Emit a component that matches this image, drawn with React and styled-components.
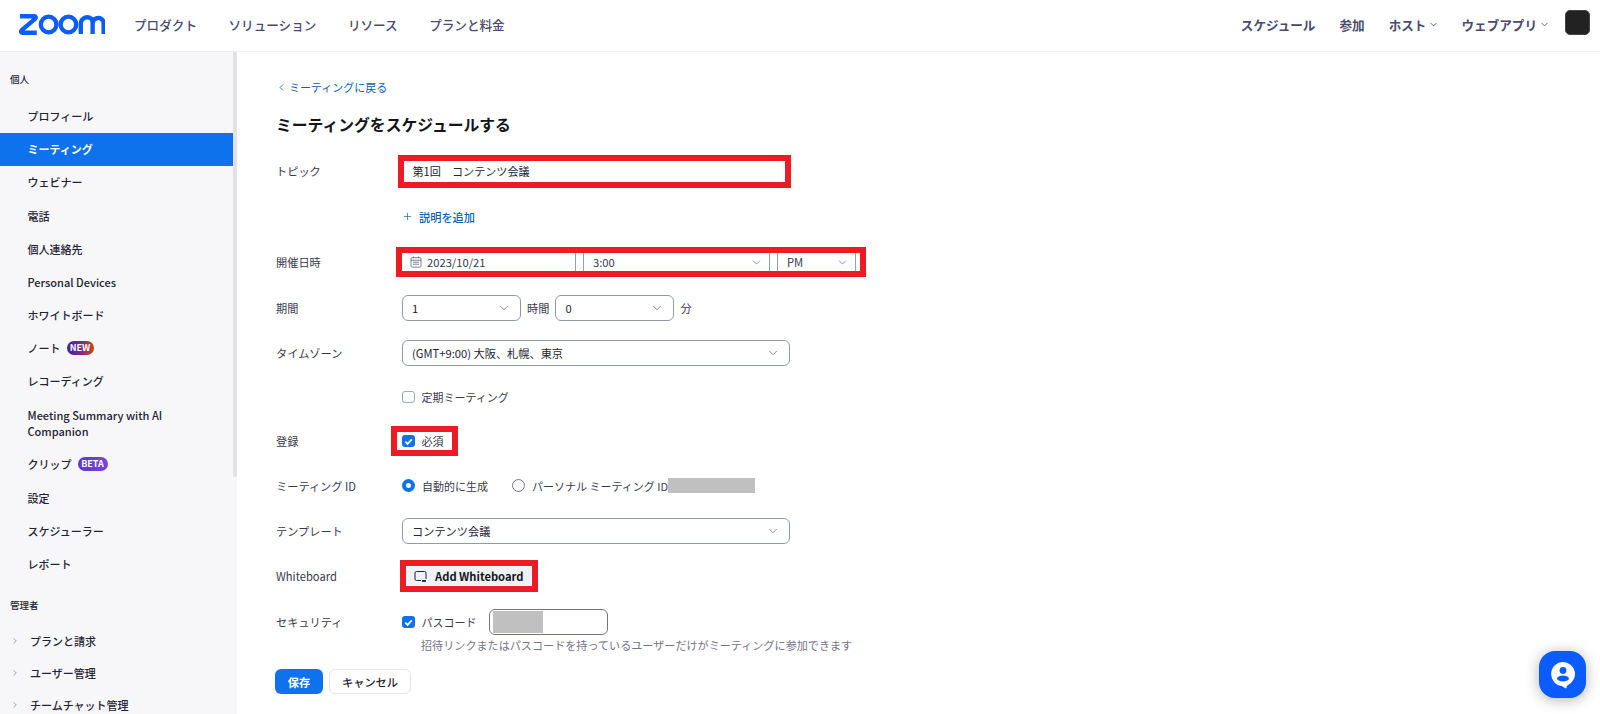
import React from 'react';
import styled, { createGlobalStyle } from 'styled-components';
import { ChevronDown, ChevronLeft, ChevronRight, Plus } from 'lucide-react';

const GlobalStyle = createGlobalStyle`
	html, body {
		margin: 0;
		height: 100%;
		overflow: hidden;
		background: #fff;
		font-family: 'Noto Sans CJK JP', 'Noto Sans', sans-serif;
		color: #232333;
	}
	* {
		box-sizing: border-box;
	}
`;

const personal = [
	{ text: 'プロフィール' },
	{ text: 'ミーティング', active: true },
	{ text: 'ウェビナー' },
	{ text: '電話' },
	{ text: '個人連絡先' },
	{ text: 'Personal Devices' },
	{ text: 'ホワイトボード' },
	{ text: 'ノート', badge: 'NEW' },
	{ text: 'レコーディング' },
	{ text: 'Meeting Summary with AI Companion', tall: true },
	{ text: 'クリップ', badge: 'BETA' },
	{ text: '設定' },
	{ text: 'スケジューラー' },
	{ text: 'レポート' },
];

const admin = ['プランと請求', 'ユーザー管理', 'チームチャット管理'];

function ZoomLogo() {
	return (
		<svg width="87" height="22" viewBox="0 0 88 22" fill="none" stroke="#0b5cff" strokeWidth="4.4">
			<path d="M2 3.2h14.5c1.4 0 2 1.3 1 2.3L3.5 17.5c-1 1-.4 2.3 1 2.3H19" strokeLinejoin="round" />
			<circle cx="31" cy="11.5" r="7.9" />
			<circle cx="51" cy="11.5" r="7.9" />
			<path d="M63.5 21v-11a6.6 6.6 0 0 1 10.6-4.4a6.6 6.6 0 0 1 1.4 4.4v11M75.5 10a5.7 5.7 0 0 1 10.4-2.6c.5 1 .7 1.8.7 2.6v11" />
		</svg>
	);
}

function Check() {
	return (
		<svg width="9" height="9" viewBox="0 0 10 10" fill="none" stroke="#fff" strokeWidth="2">
			<path d="M1.5 5.2l2.5 2.4 4.6-5" />
		</svg>
	);
}

function Select({ width, children }) {
	return (
		<SelectBox $width={width}>
			<span>{children}</span>
			<ChevronDown size={14} strokeWidth={1.4} color="#6e7680" />
		</SelectBox>
	);
}

export default function App() {
	return (
		<Page>
			<GlobalStyle />
			<Header>
				<LogoWrap>
					<ZoomLogo />
				</LogoWrap>
				<Nav>
					<NavLink>プロダクト</NavLink>
					<NavLink>ソリューション</NavLink>
					<NavLink>リソース</NavLink>
					<NavLink>プランと料金</NavLink>
				</Nav>
				<RightNav>
					<NavLink $strong>スケジュール</NavLink>
					<NavLink $strong>参加</NavLink>
					<NavLink $strong>
						ホスト
						<ChevronDown size={11} strokeWidth={1.8} />
					</NavLink>
					<NavLink $strong $pull>
						ウェブアプリ
						<ChevronDown size={11} strokeWidth={1.8} />
					</NavLink>
					<Avatar />
				</RightNav>
			</Header>
			<Body>
				<Sidebar>
					<SideInner>
						<SectionLabel>個人</SectionLabel>
						{personal.map(item => (
							<SideItem key={item.text} $active={item.active} $tall={item.tall}>
								<span>{item.text}</span>
								{item.badge && <Badge $kind={item.badge}>{item.badge}</Badge>}
							</SideItem>
						))}
						<SectionLabel $admin>管理者</SectionLabel>
						{admin.map(text => (
							<AdminItem key={text}>
								<ChevronRight size={10} strokeWidth={1.5} color="#747487" />
								{text}
							</AdminItem>
						))}
					</SideInner>
					<ScrollTrack>
						<ScrollThumb />
					</ScrollTrack>
				</Sidebar>
				<Main>
					<BackLink>
						<ChevronLeft size={11} strokeWidth={1.8} />
						ミーティングに戻る
					</BackLink>
					<Title>ミーティングをスケジュールする</Title>

					<Row $h={46}>
						<Label>トピック</Label>
						<RedBox $width={393} $height={33}>
							<TopicText>第1回　コンテンツ会議</TopicText>
						</RedBox>
					</Row>
					<Row $h={45}>
						<span />
						<AddLink>
							<Plus size={11} strokeWidth={1.5} />
							説明を追加
						</AddLink>
					</Row>
					<Row $h={46}>
						<Label>開催日時</Label>
						<RedBox $width={470} $height={30} $start={-6}>
							<DateRow>
								<DateCell $width={174}>
									<svg width="12" height="12" viewBox="0 0 12 12" fill="none" stroke="#747487" strokeWidth="0.9">
										<rect x="1" y="1.6" width="10" height="9.6" rx="1.4" />
										<path d="M1 4.2h10M3.4.4v2M8.6.4v2M3 6.2h6M3 8.2h6" />
									</svg>
									2023/10/21
								</DateCell>
								<DateCell $width={187} $gap>
									<span>3:00</span>
									<ChevronDown size={13} strokeWidth={1.4} color="#6e7680" />
								</DateCell>
								<DateCell $width={79} $gap>
									<span>PM</span>
									<ChevronDown size={13} strokeWidth={1.4} color="#6e7680" />
								</DateCell>
							</DateRow>
						</RedBox>
					</Row>
					<Row $h={45}>
						<Label>期間</Label>
						<Inline>
							<Select width={119}>1</Select>
							<InlineText>時間</InlineText>
							<Select width={119}>0</Select>
							<InlineText>分</InlineText>
						</Inline>
					</Row>
					<Row $h={45}>
						<Label>タイムゾーン</Label>
						<Select width={388}>(GMT+9:00) 大阪、札幌、東京</Select>
					</Row>
					<Row $h={44}>
						<span />
						<CheckRow>
							<CheckBox />
							定期ミーティング
						</CheckRow>
					</Row>
					<Row $h={44}>
						<Label>登録</Label>
						<RedBox $width={67} $height={30} $start={-11}>
							<CheckRow>
								<CheckBox $on>
									<Check />
								</CheckBox>
								必須
							</CheckRow>
						</RedBox>
					</Row>
					<Row $h={45}>
						<Label>ミーティング ID</Label>
						<Inline>
							<CheckRow>
								<Radio $on />
								自動的に生成
							</CheckRow>
							<RadioGap />
							<CheckRow>
								<Radio />
								パーソナル ミーティング ID
							</CheckRow>
							<Redacted $width={87} $height={15} />
						</Inline>
					</Row>
					<Row $h={45}>
						<Label>テンプレート</Label>
						<Select width={388}>コンテンツ会議</Select>
					</Row>
					<Row $h={46}>
						<Label>Whiteboard</Label>
						<RedBox $width={138} $height={32} $start={-2}>
							<WhiteboardBtn>
								<svg width="13" height="13" viewBox="0 0 13 13" fill="none" stroke="#232333" strokeWidth="1">
									<path d="M7 10.5H2.5a1.5 1.5 0 0 1-1.5-1.5V3a1.5 1.5 0 0 1 1.5-1.5h8A1.5 1.5 0 0 1 12 3v6" />
									<path d="M8 11H12" strokeWidth="1.8" />
								</svg>
								Add Whiteboard
							</WhiteboardBtn>
						</RedBox>
					</Row>
					<SecurityRow>
						<Label>セキュリティ</Label>
						<div>
							<Inline>
								<CheckRow>
									<CheckBox $on>
										<Check />
									</CheckBox>
									パスコード
								</CheckRow>
								<PassBox>
									<Redacted $width={50} $height={22} />
								</PassBox>
							</Inline>
							<Hint>招待リンクまたはパスコードを持っているユーザーだけがミーティングに参加できます</Hint>
						</div>
					</SecurityRow>
					<Actions>
						<SaveBtn>保存</SaveBtn>
						<CancelBtn>キャンセル</CancelBtn>
					</Actions>
				</Main>
			</Body>
			<ChatFab>
				<svg width="26" height="28" viewBox="0 0 26 28">
					<path d="M13 1a12 12 0 0 1 5 22.9c-1 .5-1.3 1.4-1.4 2.5-.1.9-.8 1.2-1.5.7l-3.5-2.2A12 12 0 0 1 13 1z" fill="#fff" />
					<circle cx="13" cy="9.5" r="3.4" fill="#0b5cff" />
					<ellipse cx="13" cy="17.5" rx="6" ry="3" fill="#0b5cff" />
				</svg>
			</ChatFab>
		</Page>
	);
}

const Page = styled.div`
	position: relative;
	height: 714px;
	overflow: hidden;
`;
const Header = styled.header`
	display: flex;
	align-items: center;
	height: 52px;
	padding: 0 10px 3px 18px;
	background: #fff;
	border-bottom: 1px solid #eeeef2;
`;
const LogoWrap = styled.div`
	display: flex;
	width: 116px;
`;
const Nav = styled.nav`
	display: flex;
	gap: 31.5px;
`;
const RightNav = styled.nav`
	display: flex;
	align-items: center;
	gap: 24px;
	margin-left: auto;
`;
const NavLink = styled.span`
	display: flex;
	align-items: center;
	gap: 2px;
	margin-left: ${({ $pull }) => ($pull ? '-2px' : '0')};
	font-size: 12.6px;
	font-weight: ${({ $strong }) => ($strong ? 700 : 500)};
	color: #4a4a6e;
`;
const Avatar = styled.div`
	width: 25px;
	height: 25px;
	margin-left: -9px;
	margin-bottom: 3px;
	background: #222;
	border: 1px solid #444;
	border-radius: 5px;
`;
const Body = styled.div`
	display: flex;
	height: 662px;
`;
const Sidebar = styled.aside`
	display: flex;
	flex: none;
	width: 237px;
	background: #f7f7fa;
	overflow: hidden;
`;
const SideInner = styled.div`
	width: 233px;
	flex: none;
`;
const ScrollTrack = styled.div`
	width: 4px;
`;
const ScrollThumb = styled.div`
	width: 4px;
	height: 425px;
	background: #e2e2e6;
	border-radius: 0 0 2px 2px;
`;
const SectionLabel = styled.div`
	padding-left: 10px;
	margin-top: ${({ $admin }) => ($admin ? '16px' : '18px')};
	margin-bottom: ${({ $admin }) => ($admin ? '11px' : '11.6px')};
	height: 18px;
	line-height: 18px;
	font-size: 9.5px;
	font-weight: 500;
`;
const SideItem = styled.div`
	display: flex;
	align-items: center;
	gap: 6px;
	height: ${({ $tall }) => ($tall ? '50px' : '33.15px')};
	padding-left: 27.5px;
	padding-right: 40px;
	font-size: 11px;
	line-height: 16px;
	font-weight: ${({ $active }) => ($active ? 700 : 500)};
	color: ${({ $active }) => ($active ? '#fff' : '#232333')};
	background: ${({ $active }) => ($active ? '#0e72ed' : 'transparent')};
`;
const Badge = styled.span`
	display: inline-flex;
	align-items: center;
	justify-content: center;
	width: ${({ $kind }) => ($kind === 'NEW' ? '27px' : '30px')};
	height: 14px;
	font-size: 9px;
	font-weight: 700;
	color: #fff;
	border-radius: 7px;
	background: ${({ $kind }) =>
		$kind === 'NEW'
			? 'linear-gradient(90deg, #3d1fa0, #7a2a90 50%, #c9480a)'
			: 'linear-gradient(90deg, #5a35d8, #7a45d8)'};
`;
const AdminItem = styled.div`
	display: flex;
	align-items: center;
	gap: 10px;
	height: 32px;
	padding-left: 10px;
	font-size: 11px;
	font-weight: 500;
`;
const Main = styled.main`
	flex: 1;
	padding: 26px 0 0 39px;
`;
const BackLink = styled.div`
	display: flex;
	align-items: center;
	gap: 2px;
	height: 18px;
	font-size: 11px;
	color: #0e5fb5;
`;
const Title = styled.h1`
	margin: 18px 0 12px;
	height: 22px;
	line-height: 22px;
	font-size: 15.8px;
	font-weight: 700;
	color: #131619;
`;
const Row = styled.div`
	display: grid;
	grid-template-columns: 126px 1fr;
	align-items: center;
	height: ${({ $h }) => $h}px;
`;
const SecurityRow = styled.div`
	display: grid;
	grid-template-columns: 126px 1fr;
	height: 56px;
	padding-top: 10px;
`;
const Label = styled.div`
	font-size: 11.2px;
	line-height: 26px;
	color: #39394d;
`;
const RedBox = styled.div`
	display: flex;
	align-items: center;
	width: ${({ $width }) => $width}px;
	height: ${({ $height }) => $height}px;
	margin-left: ${({ $start }) => $start ?? -4}px;
	padding-left: 5px;
	background: #fff;
	border: 6px solid #ed1c24;
`;
const TopicText = styled.span`
	padding-left: 3.5px;
	font-size: 11.1px;
`;
const DateRow = styled.div`
	display: flex;
	align-items: flex-start;
	height: 100%;
	margin-left: -5px;
`;
const DateCell = styled.div`
	display: flex;
	align-items: center;
	justify-content: ${({ $gap }) => ($gap ? 'space-between' : 'flex-start')};
	gap: 5px;
	width: ${({ $width }) => $width}px;
	height: 100%;
	margin-right: 7px;
	padding: ${({ $gap }) => ($gap ? '0 6px 0 9px' : '0 0 0 8px')};
	font-size: 11.2px;
	color: #39394d;
	border-right: 1px solid #98a0a9;
	border-left: ${({ $gap }) => ($gap ? '1px solid #98a0a9' : 'none')};
`;
const SelectBox = styled.div`
	display: flex;
	align-items: center;
	justify-content: space-between;
	flex: none;
	width: ${({ $width }) => $width}px;
	height: 26px;
	padding: 0 9px;
	font-size: 11.2px;
	color: #232333;
	background: #fff;
	border: 1px solid #8e9aa6;
	border-radius: 6px;
`;
const Inline = styled.div`
	display: flex;
	align-items: center;
`;
const InlineText = styled.span`
	margin: 0 6px;
	font-size: 11.2px;
	color: #39394d;
`;
const AddLink = styled.div`
	display: flex;
	align-items: center;
	gap: 6px;
	font-size: 11.2px;
	font-weight: 500;
	color: #0e5fb5;
`;
const CheckRow = styled.div`
	display: flex;
	align-items: center;
	gap: 7px;
	font-size: 11px;
	color: #39394d;
`;
const CheckBox = styled.span`
	display: flex;
	align-items: center;
	justify-content: center;
	width: 12.5px;
	height: 12.5px;
	background: ${({ $on }) => ($on ? '#0e72ed' : '#fff')};
	border: ${({ $on }) => ($on ? 'none' : '1px solid #a0a8b0')};
	border-radius: 3px;
`;
const Radio = styled.span`
	width: 13px;
	height: 13px;
	background: #fff;
	border-radius: 50%;
	border: ${({ $on }) => ($on ? '4px solid #0e72ed' : '1px solid #747487')};
`;
const RadioGap = styled.span`
	width: 24px;
`;
const Redacted = styled.span`
	display: block;
	width: ${({ $width }) => $width}px;
	height: ${({ $height }) => $height}px;
	background: #c0c0c0;
`;
const WhiteboardBtn = styled.div`
	display: flex;
	align-items: center;
	gap: 8px;
	flex: none;
	height: 100%;
	margin-left: -5px;
	padding: 0 7px;
	width: 126px;
	font-size: 11.2px;
	font-weight: 700;
	white-space: nowrap;
	color: #131619;
	background: #eef1f5;
	border: 1px solid #fff;

	svg {
		flex: none;
	}
`;
const PassBox = styled.div`
	display: flex;
	align-items: center;
	width: 119px;
	height: 26px;
	margin-left: 12px;
	padding-left: 3px;
	border: 1px solid #747487;
	border-radius: 6px;
`;
const Hint = styled.div`
	height: 15px;
	overflow: hidden;
	padding-left: 19px;
	margin-top: 1px;
	font-size: 11.1px;
	line-height: 18px;
	color: #747487;
`;
const Actions = styled.div`
	display: flex;
	gap: 6px;
	margin: 14px 0 0 -1px;
`;
const SaveBtn = styled.button`
	width: 48px;
	height: 25px;
	padding: 0;
	font: 700 11.2px 'Noto Sans CJK JP', sans-serif;
	color: #fff;
	background: #0e72ed;
	border: none;
	border-radius: 6px;
`;
const CancelBtn = styled.button`
	width: 82px;
	height: 25px;
	padding: 0;
	font: 500 11.2px 'Noto Sans CJK JP', sans-serif;
	color: #232333;
	background: #fff;
	border: 1px solid #e4e4ea;
	border-radius: 6px;
`;
const ChatFab = styled.div`
	position: absolute;
	left: 1539px;
	top: 651px;
	display: flex;
	align-items: center;
	justify-content: center;
	width: 47px;
	height: 47px;
	background: #0b5cff;
	border-radius: 16px;
	box-shadow: 0 2px 14px rgba(0, 0, 0, 0.3);
`;
